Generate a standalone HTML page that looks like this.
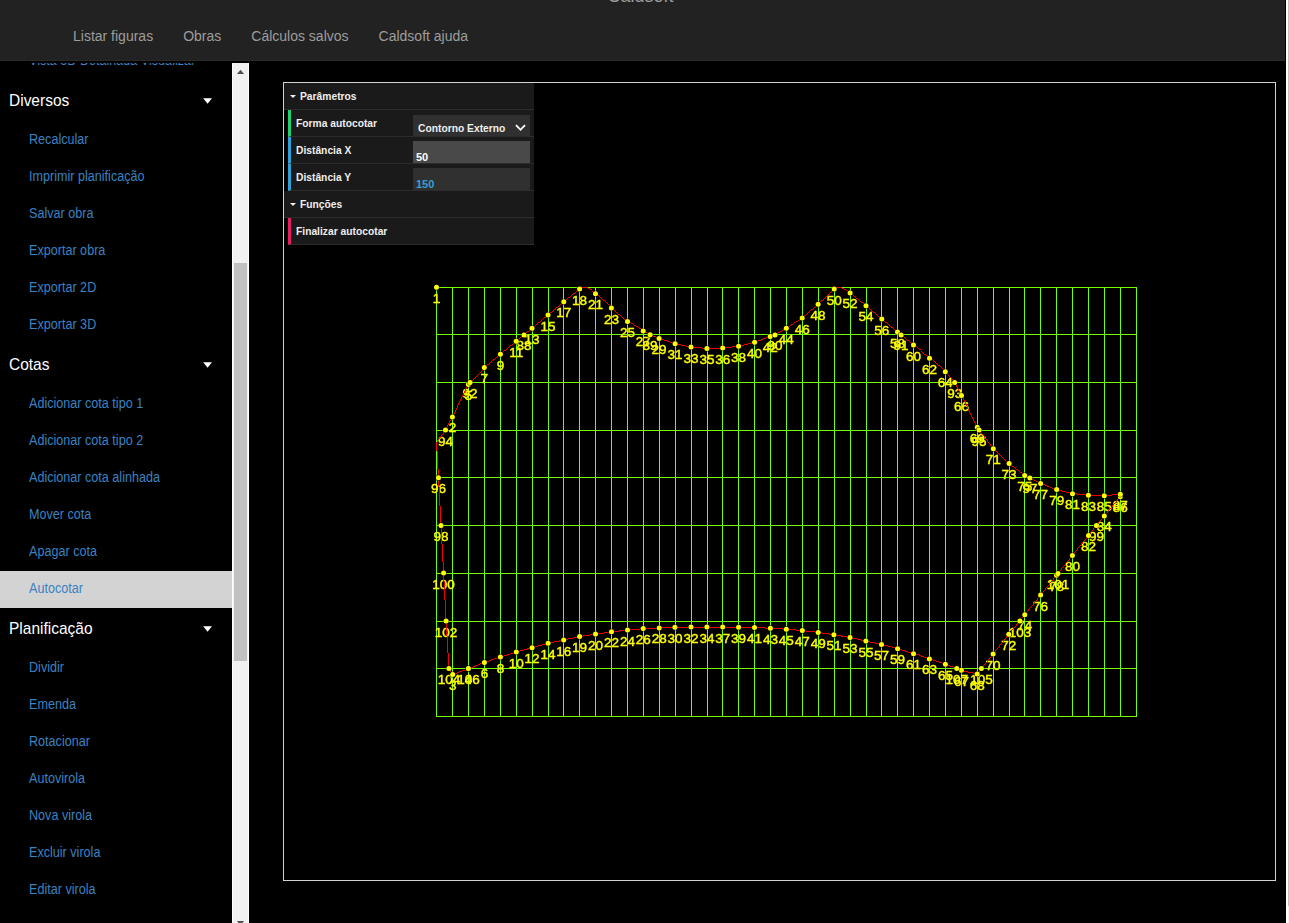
<!DOCTYPE html>
<html lang="pt-br">
<head>
<meta charset="utf-8">
<title>Caldsoft</title>
<style>
*{box-sizing:border-box}
html,body{margin:0;padding:0;background:#000;width:1289px;height:923px;overflow:hidden}
body{font-family:"Liberation Sans",Arial,sans-serif;font-size:14px;color:#fff;position:relative}
.hdr{position:absolute;left:0;top:0;width:1285px;height:61px;background:#222;border-bottom:1px solid #292929}
.brand{position:absolute;left:0;width:1281px;top:-14px;text-align:center;font-size:18px;line-height:20px;color:#9d9d9d}
.nav{position:absolute;left:58px;top:26px;height:20px;white-space:nowrap}
.nav a{display:inline-block;padding:0 15px;color:#9d9d9d;font-size:14px;line-height:20px;text-decoration:none}
.rs1{position:absolute;left:1286px;top:0;width:2px;height:923px;background:#fff}
.rs2{position:absolute;left:1288px;top:0;width:1px;height:906px;background:#c1c1c1}
.rs3{position:absolute;left:1288px;top:906px;width:1px;height:17px;background:#f1f1f1}
.side{position:absolute;left:0;top:63px;width:232px;height:860px;overflow:hidden}
.side .in{position:absolute;left:0;top:-20px;width:232px}
.side h4{margin:0;font-weight:normal;font-size:16.4px;height:42px;line-height:41.4px;padding-left:9px;color:#fff;position:relative}
.side h4 i{position:absolute;left:203.2px;top:18.2px;width:8.8px;height:5.5px;background:#fff;clip-path:polygon(0 0,100% 0,50% 100%)}
.side a{display:block;height:37px;line-height:34px;padding-left:29px;color:#3a82c2;font-size:14px;text-decoration:none;white-space:nowrap}
.side a.on{background:#d3d3d3}
.side a span{display:inline-block;transform:scaleX(.9);transform-origin:0 50%}
.side h4 span{display:inline-block;transform:scaleX(.945);transform-origin:0 50%}
.sb{position:absolute;left:232px;top:63px;width:17px;height:860px;background:#f1f1f1;border-left:1px solid #fff;border-right:1px solid #fff}
.sb .th{position:absolute;left:1px;top:200px;width:13px;height:398px;background:#c1c1c1}
.sb .up{position:absolute;left:3.7px;top:6.8px;width:7.6px;height:4.4px;background:#505050;clip-path:polygon(0 100%,100% 100%,50% 0)}
.sb .dn{position:absolute;left:3.7px;top:857.8px;width:7.6px;height:4.4px;background:#505050;clip-path:polygon(0 0,100% 0,50% 100%)}
.frame{position:absolute;left:283px;top:82px;width:993px;height:799px;border:1px solid #d3d3d3;background:#000}
.cv{position:absolute;left:0;top:0;will-change:transform}
.lb text{font-family:"Liberation Sans",Arial,sans-serif;font-size:13.5px;fill:#ffff00;stroke:#ffff00;stroke-width:.4;text-anchor:middle}
.gr{stroke:#74ff00;stroke-width:1;fill:none;shape-rendering:crispEdges}
.rd{stroke:#ff0000;stroke-width:.95;fill:none;shape-rendering:crispEdges}
.pt circle{fill:#ffff00;stroke:#000;stroke-width:1.4;stroke-opacity:.55;paint-order:stroke}
/* dat.gui panel */
.dg{position:absolute;left:0;top:0;width:250px;font-size:11px;font-weight:bold;color:#eee;font-family:"Liberation Sans",Arial,sans-serif}
.dg div{position:relative;height:27px;line-height:27px;background:#1a1a1a;border-bottom:1px solid #2c2c2c;white-space:nowrap;overflow:hidden}
.dg .t{padding-left:16px}
.dg span{display:inline-block;transform:scaleX(.934);transform-origin:0 50%}
.dg .t i{position:absolute;left:5.5px;top:12px;width:0;height:0;border-left:3px solid transparent;border-right:3px solid transparent;border-top:3.5px solid #eee}
.dg .r{margin-left:4px;border-left:3px solid #2fa1d6;padding-left:5px}
.dg .r.s{border-left-color:#1ed36f}
.dg .r.f{border-left-color:#e61d5f}
.dg .r b{position:absolute;left:122px;top:4px;width:117px;height:22px;background:#303030;color:#2fa1d6;font-weight:bold;font-size:11px;line-height:12px;padding:9.8px 0 0 3px}
.dg .r b.foc{background:#494949;color:#fff}
.dg .r b.sel{top:5px;height:26px;color:#eee;padding:6.5px 0 0 5px}
.dg .r b.sel svg{position:absolute;left:102px;top:9px}
</style>
</head>
<body>
<div class="hdr">
  <div class="brand">Caldsoft</div>
  <div class="nav"><a>Listar figuras</a><a>Obras</a><a>Cálculos salvos</a><a>Caldsoft ajuda</a></div>
</div>
<div class="rs1"></div><div class="rs2"></div><div class="rs3"></div>
<div class="side"><div class="in">
  <a><span>Vista 3D Detalhada Visualizar</span></a>
  <h4><span>Diversos</span><i></i></h4>
  <a><span>Recalcular</span></a><a><span>Imprimir planificação</span></a><a><span>Salvar obra</span></a><a><span>Exportar obra</span></a><a><span>Exportar 2D</span></a><a><span>Exportar 3D</span></a>
  <h4><span>Cotas</span><i></i></h4>
  <a><span>Adicionar cota tipo 1</span></a><a><span>Adicionar cota tipo 2</span></a><a><span>Adicionar cota alinhada</span></a><a><span>Mover cota</span></a><a><span>Apagar cota</span></a><a class="on"><span>Autocotar</span></a>
  <h4><span>Planificação</span><i></i></h4>
  <a><span>Dividir</span></a><a><span>Emenda</span></a><a><span>Rotacionar</span></a><a><span>Autovirola</span></a><a><span>Nova virola</span></a><a><span>Excluir virola</span></a><a><span>Editar virola</span></a>
</div></div>
<div class="sb"><div class="up"></div><div class="th"></div><div class="dn"></div></div>
<div class="frame">
<svg class="cv" width="991" height="797" viewBox="284 83 991 797">
<path class="gr" d="M436.5 287V717M452.5 287V717M468.5 287V717M484.5 287V717M500.5 287V717M516.5 287V717M532.5 287V717M548.5 287V717M563.5 287V717M579.5 287V717M595.5 287V717M611.5 287V717M627.5 287V717M643.5 287V717M659.5 287V717M675.5 287V717M691.5 287V717M707.5 287V717M722.5 287V717M738.5 287V717M754.5 287V717M770.5 287V717M786.5 287V717M802.5 287V717M818.5 287V717M834.5 287V717M850.5 287V717M866.5 287V717M881.5 287V717M897.5 287V717M913.5 287V717M929.5 287V717M945.5 287V717M961.5 287V717M977.5 287V717M993.5 287V717M1009.5 287V717M1024.5 287V717M1040.5 287V717M1056.5 287V717M1072.5 287V717M1088.5 287V717M1104.5 287V717M1120.5 287V717M1136.5 287V717M436 287.5H1137M436 334.5H1137M436 382.5H1137M436 430.5H1137M436 477.5H1137M436 525.5H1137M436 573.5H1137M436 621.5H1137M436 668.5H1137M436 716.5H1137"/>
<g class="lb">
<text x="436.5" y="302.7">1</text>
<text x="452.4" y="432.4">2</text>
<text x="452.7" y="690.1">3</text>
<text x="468.4" y="684.1">4</text>
<text x="468.4" y="399.9">5</text>
<text x="484.4" y="677.9">6</text>
<text x="484.3" y="383">7</text>
<text x="500.4" y="672.5">8</text>
<text x="500.4" y="369.8">9</text>
<text x="516.3" y="667.6">10</text>
<text x="516.2" y="356.7">11</text>
<text x="532.1" y="663.2">12</text>
<text x="532" y="343.7">13</text>
<text x="548.1" y="658.8">14</text>
<text x="548" y="330.6">15</text>
<text x="563.7" y="655.5">16</text>
<text x="563.8" y="317.3">17</text>
<text x="579.6" y="304.5">18</text>
<text x="579.6" y="652.1">19</text>
<text x="595.5" y="649.6">20</text>
<text x="595.5" y="309.2">21</text>
<text x="611.5" y="647.2">22</text>
<text x="611.4" y="323.6">23</text>
<text x="627.5" y="645.5">24</text>
<text x="627.5" y="337">25</text>
<text x="643.2" y="644.1">26</text>
<text x="643.2" y="346.4">27</text>
<text x="659.2" y="643.4">28</text>
<text x="659.1" y="354">29</text>
<text x="674.9" y="642.7">30</text>
<text x="675.1" y="359.2">31</text>
<text x="691" y="642.5">32</text>
<text x="691" y="362.5">33</text>
<text x="706.9" y="642.5">34</text>
<text x="706.9" y="364">35</text>
<text x="722.7" y="363.5">36</text>
<text x="722.7" y="642.5">37</text>
<text x="738.6" y="361.8">38</text>
<text x="738.6" y="642.7">39</text>
<text x="754.6" y="357.7">40</text>
<text x="754.5" y="643.1">41</text>
<text x="770.2" y="352">42</text>
<text x="770.4" y="643.8">43</text>
<text x="786.3" y="343.7">44</text>
<text x="786.3" y="644.7">45</text>
<text x="802.2" y="333.5">46</text>
<text x="802.3" y="646.1">47</text>
<text x="818.1" y="319.7">48</text>
<text x="818.2" y="647.9">49</text>
<text x="834.2" y="304.6">50</text>
<text x="833.9" y="650.3">51</text>
<text x="850.1" y="308.4">52</text>
<text x="850" y="653.1">53</text>
<text x="866" y="321.2">54</text>
<text x="865.9" y="656.5">55</text>
<text x="881.8" y="334.6">56</text>
<text x="881.5" y="660">57</text>
<text x="897.5" y="347.5">58</text>
<text x="897.6" y="664.2">59</text>
<text x="913.5" y="360.5">60</text>
<text x="913.5" y="669.2">61</text>
<text x="929.5" y="373.8">62</text>
<text x="929.4" y="674.4">63</text>
<text x="945.3" y="387.2">64</text>
<text x="945.4" y="679.7">65</text>
<text x="961.5" y="410.9">66</text>
<text x="961.4" y="685.8">67</text>
<text x="977.2" y="689.6">68</text>
<text x="977.3" y="442.8">69</text>
<text x="993.1" y="669.5">70</text>
<text x="993.3" y="464.2">71</text>
<text x="1008.8" y="649.7">72</text>
<text x="1009.1" y="479">73</text>
<text x="1024.8" y="630.2">74</text>
<text x="1024.7" y="490.9">75</text>
<text x="1040.6" y="610.6">76</text>
<text x="1040.6" y="499">77</text>
<text x="1056.5" y="590.8">78</text>
<text x="1056.7" y="505.1">79</text>
<text x="1072.4" y="570.9">80</text>
<text x="1072.5" y="509.2">81</text>
<text x="1088.5" y="551.1">82</text>
<text x="1088.4" y="510.7">83</text>
<text x="1104.3" y="531.4">84</text>
<text x="1104.3" y="511.3">85</text>
<text x="1120.3" y="512.2">86</text>
<text x="1120.3" y="509.7">87</text>
<text x="524" y="350.4">88</text>
<text x="650.1" y="350.2">89</text>
<text x="775" y="350.4">90</text>
<text x="901.1" y="350.4">91</text>
<text x="470.1" y="398">92</text>
<text x="954.7" y="397.9">93</text>
<text x="445.5" y="445.6">94</text>
<text x="979.1" y="445.5">95</text>
<text x="438.5" y="493.2">96</text>
<text x="1029.9" y="493.4">97</text>
<text x="441" y="540.9">98</text>
<text x="1096.4" y="540.9">99</text>
<text x="443.6" y="588.6">100</text>
<text x="1058" y="588.9">101</text>
<text x="446.1" y="636.6">102</text>
<text x="1019.9" y="636.5">103</text>
<text x="448.9" y="684.1">104</text>
<text x="981.4" y="684">105</text>
<text x="468.4" y="684.1">106</text>
<text x="956.8" y="684">107</text>
</g>
<polyline class="rd" points="436.6,442.3 445.5,430.1 452.4,416.9 468.4,384.4 470.1,382.5 484.3,367.5 500.4,354.3 516.2,341.2 524,334.9 532,328.2 548,315.1 563.8,301.8 579.6,289 582.5,287.6 585.5,287.5 588.5,288.5 592,290.8 595.5,293.7 611.4,308.1 627.5,321.5 643.2,330.9 650.1,334.7 659.1,338.5 675.1,343.7 691,347 706.9,348.5 722.7,348 738.6,346.3 754.6,342.2 770.2,336.5 775,334.9 786.3,328.2 802.2,318 818.1,304.2 834.2,289.1 837,287.6 840,287.5 843,288.4 846.5,290.5 850.1,292.9 866,305.7 881.8,319.1 897.5,332 901.1,334.9 913.5,345 929.5,358.3 945.3,371.7 954.7,382.4 961.5,395.4 977.3,427.3 979.1,430 993.3,448.7 1009.1,463.5 1024.7,475.4 1029.9,477.9 1040.6,483.5 1056.7,489.6 1072.5,493.7 1088.4,495.2 1104.3,495.8 1120.3,494.2 1120.3,496.7 1104.3,515.9 1096.4,525.4 1088.5,535.6 1072.4,555.4 1058,573.4 1056.5,575.3 1040.6,595.1 1024.8,614.7 1019.9,621 1008.8,634.2 993.1,654 981.4,668.5 977.2,674.1 961.4,670.3 956.8,668.5 945.4,664.2 929.4,658.9 913.5,653.7 897.6,648.7 881.5,644.5 865.9,641 850,637.6 833.9,634.8 818.2,632.4 802.3,630.6 786.3,629.2 770.4,628.3 754.5,627.6 738.6,627.2 722.7,627 706.9,627 691,627 674.9,627.2 659.2,627.9 643.2,628.6 627.5,630 611.5,631.7 595.5,634.1 579.6,636.6 563.7,640 548.1,643.3 532.1,647.7 516.3,652.1 500.4,657 484.4,662.4 468.4,668.6 452.7,674.6 448.9,668.6 446.1,621.1 443.6,573.1 441,525.4 438.5,477.7 436.6,444 436.6,442.3"/>
<g class="pt">
<circle cx="436.5" cy="287.2" r="2.5"/>
<circle cx="452.4" cy="416.9" r="2.5"/>
<circle cx="452.7" cy="674.6" r="2.5"/>
<circle cx="468.4" cy="668.6" r="2.5"/>
<circle cx="468.4" cy="384.4" r="2.5"/>
<circle cx="484.4" cy="662.4" r="2.5"/>
<circle cx="484.3" cy="367.5" r="2.5"/>
<circle cx="500.4" cy="657" r="2.5"/>
<circle cx="500.4" cy="354.3" r="2.5"/>
<circle cx="516.3" cy="652.1" r="2.5"/>
<circle cx="516.2" cy="341.2" r="2.5"/>
<circle cx="532.1" cy="647.7" r="2.5"/>
<circle cx="532" cy="328.2" r="2.5"/>
<circle cx="548.1" cy="643.3" r="2.5"/>
<circle cx="548" cy="315.1" r="2.5"/>
<circle cx="563.7" cy="640" r="2.5"/>
<circle cx="563.8" cy="301.8" r="2.5"/>
<circle cx="579.6" cy="289" r="2.5"/>
<circle cx="579.6" cy="636.6" r="2.5"/>
<circle cx="595.5" cy="634.1" r="2.5"/>
<circle cx="595.5" cy="293.7" r="2.5"/>
<circle cx="611.5" cy="631.7" r="2.5"/>
<circle cx="611.4" cy="308.1" r="2.5"/>
<circle cx="627.5" cy="630" r="2.5"/>
<circle cx="627.5" cy="321.5" r="2.5"/>
<circle cx="643.2" cy="628.6" r="2.5"/>
<circle cx="643.2" cy="330.9" r="2.5"/>
<circle cx="659.2" cy="627.9" r="2.5"/>
<circle cx="659.1" cy="338.5" r="2.5"/>
<circle cx="674.9" cy="627.2" r="2.5"/>
<circle cx="675.1" cy="343.7" r="2.5"/>
<circle cx="691" cy="627" r="2.5"/>
<circle cx="691" cy="347" r="2.5"/>
<circle cx="706.9" cy="627" r="2.5"/>
<circle cx="706.9" cy="348.5" r="2.5"/>
<circle cx="722.7" cy="348" r="2.5"/>
<circle cx="722.7" cy="627" r="2.5"/>
<circle cx="738.6" cy="346.3" r="2.5"/>
<circle cx="738.6" cy="627.2" r="2.5"/>
<circle cx="754.6" cy="342.2" r="2.5"/>
<circle cx="754.5" cy="627.6" r="2.5"/>
<circle cx="770.2" cy="336.5" r="2.5"/>
<circle cx="770.4" cy="628.3" r="2.5"/>
<circle cx="786.3" cy="328.2" r="2.5"/>
<circle cx="786.3" cy="629.2" r="2.5"/>
<circle cx="802.2" cy="318" r="2.5"/>
<circle cx="802.3" cy="630.6" r="2.5"/>
<circle cx="818.1" cy="304.2" r="2.5"/>
<circle cx="818.2" cy="632.4" r="2.5"/>
<circle cx="834.2" cy="289.1" r="2.5"/>
<circle cx="833.9" cy="634.8" r="2.5"/>
<circle cx="850.1" cy="292.9" r="2.5"/>
<circle cx="850" cy="637.6" r="2.5"/>
<circle cx="866" cy="305.7" r="2.5"/>
<circle cx="865.9" cy="641" r="2.5"/>
<circle cx="881.8" cy="319.1" r="2.5"/>
<circle cx="881.5" cy="644.5" r="2.5"/>
<circle cx="897.5" cy="332" r="2.5"/>
<circle cx="897.6" cy="648.7" r="2.5"/>
<circle cx="913.5" cy="345" r="2.5"/>
<circle cx="913.5" cy="653.7" r="2.5"/>
<circle cx="929.5" cy="358.3" r="2.5"/>
<circle cx="929.4" cy="658.9" r="2.5"/>
<circle cx="945.3" cy="371.7" r="2.5"/>
<circle cx="945.4" cy="664.2" r="2.5"/>
<circle cx="961.5" cy="395.4" r="2.5"/>
<circle cx="961.4" cy="670.3" r="2.5"/>
<circle cx="977.2" cy="674.1" r="2.5"/>
<circle cx="977.3" cy="427.3" r="2.5"/>
<circle cx="993.1" cy="654" r="2.5"/>
<circle cx="993.3" cy="448.7" r="2.5"/>
<circle cx="1008.8" cy="634.2" r="2.5"/>
<circle cx="1009.1" cy="463.5" r="2.5"/>
<circle cx="1024.8" cy="614.7" r="2.5"/>
<circle cx="1024.7" cy="475.4" r="2.5"/>
<circle cx="1040.6" cy="595.1" r="2.5"/>
<circle cx="1040.6" cy="483.5" r="2.5"/>
<circle cx="1056.5" cy="575.3" r="2.5"/>
<circle cx="1056.7" cy="489.6" r="2.5"/>
<circle cx="1072.4" cy="555.4" r="2.5"/>
<circle cx="1072.5" cy="493.7" r="2.5"/>
<circle cx="1088.5" cy="535.6" r="2.5"/>
<circle cx="1088.4" cy="495.2" r="2.5"/>
<circle cx="1104.3" cy="515.9" r="2.5"/>
<circle cx="1104.3" cy="495.8" r="2.5"/>
<circle cx="1120.3" cy="496.7" r="2.5"/>
<circle cx="1120.3" cy="494.2" r="2.5"/>
<circle cx="524" cy="334.9" r="2.5"/>
<circle cx="650.1" cy="334.7" r="2.5"/>
<circle cx="775" cy="334.9" r="2.5"/>
<circle cx="901.1" cy="334.9" r="2.5"/>
<circle cx="470.1" cy="382.5" r="2.5"/>
<circle cx="954.7" cy="382.4" r="2.5"/>
<circle cx="445.5" cy="430.1" r="2.5"/>
<circle cx="979.1" cy="430" r="2.5"/>
<circle cx="438.5" cy="477.7" r="2.5"/>
<circle cx="1029.9" cy="477.9" r="2.5"/>
<circle cx="441" cy="525.4" r="2.5"/>
<circle cx="1096.4" cy="525.4" r="2.5"/>
<circle cx="443.6" cy="573.1" r="2.5"/>
<circle cx="1058" cy="573.4" r="2.5"/>
<circle cx="446.1" cy="621.1" r="2.5"/>
<circle cx="1019.9" cy="621" r="2.5"/>
<circle cx="448.9" cy="668.6" r="2.5"/>
<circle cx="981.4" cy="668.5" r="2.5"/>
<circle cx="468.4" cy="668.6" r="2.5"/>
<circle cx="956.8" cy="668.5" r="2.5"/>
</g>
</svg>
<div class="dg">
  <div class="t"><i></i><span>Parâmetros</span></div>
  <div class="r s"><span>Forma autocotar</span><b class="sel"><span>Contorno Externo</span><svg width="11" height="8" viewBox="0 0 11 8"><path d="M1 1.2L5.5 5.8L10 1.2" fill="none" stroke="#fff" stroke-width="1.8"/></svg></b></div>
  <div class="r"><span>Distância X</span><b class="foc">50</b></div>
  <div class="r"><span>Distância Y</span><b>150</b></div>
  <div class="t"><i></i><span>Funções</span></div>
  <div class="r f"><span>Finalizar autocotar</span></div>
</div>
</div>
</body>
</html>
